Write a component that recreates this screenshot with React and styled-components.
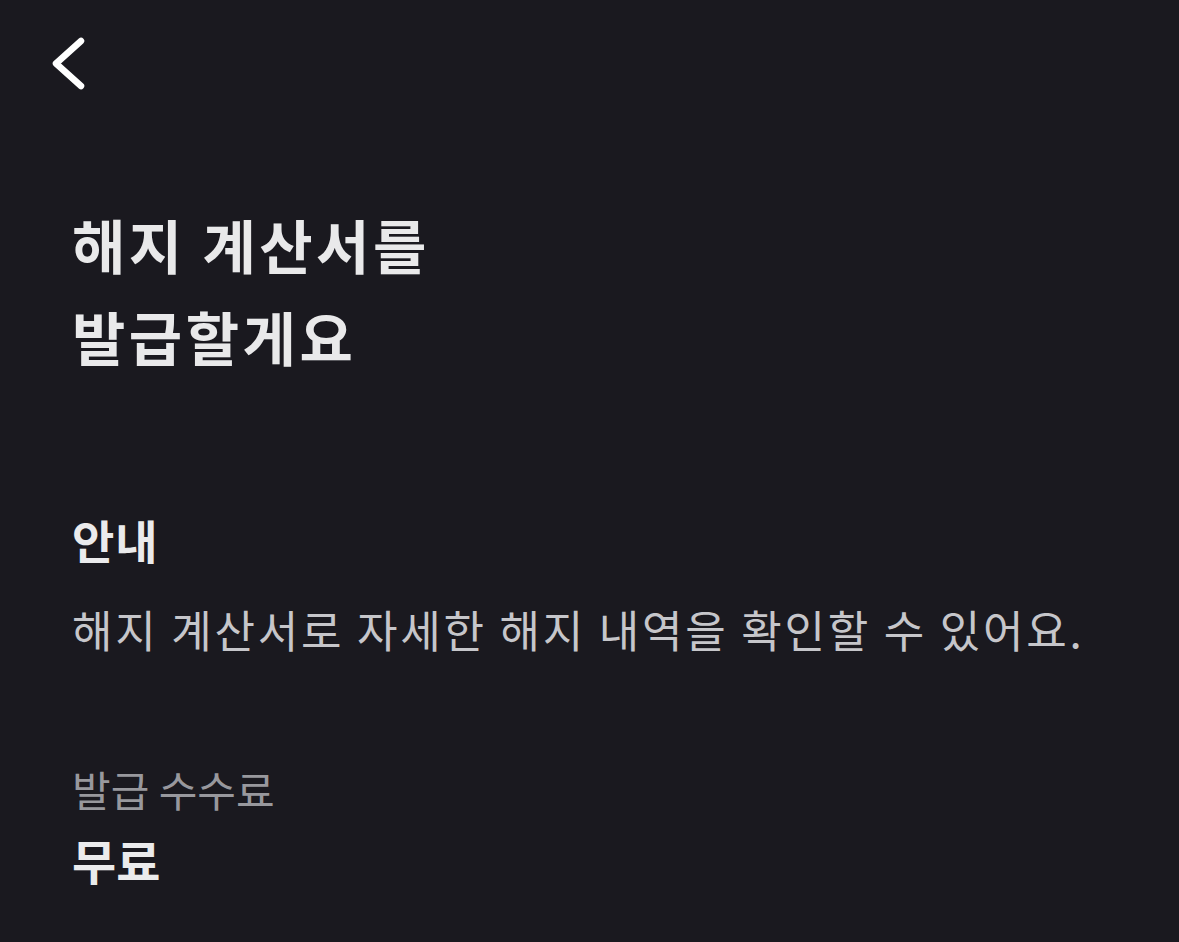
import React from 'react'
import styled, { createGlobalStyle } from 'styled-components'

const GlobalStyle = createGlobalStyle`
  html, body {
    margin: 0;
    padding: 0;
    background: #1a191f;
  }
  body {
    font-family: "Noto Sans CJK KR", "Noto Sans", sans-serif;
    -webkit-font-smoothing: antialiased;
  }
`

const BackIcon = () => (
  <svg width="40" height="56" viewBox="0 0 40 56" fill="none">
    <path
      d="M33 6 L8 28.5 L33 51"
      stroke="#ffffff"
      strokeWidth="6.5"
      strokeLinecap="round"
      strokeLinejoin="round"
    />
  </svg>
)

const App = () => {
  return (
    <Page>
      <GlobalStyle />
      <Header>
        <BackButton aria-label="뒤로">
          <BackIcon />
        </BackButton>
      </Header>
      <Content>
        <Title>
          해지 계산서를
          <br />
          발급할게요
        </Title>
        <SectionTitle>안내</SectionTitle>
        <Description>해지 계산서로 자세한 해지 내역을 확인할 수 있어요.</Description>
        <FeeLabel>발급 수수료</FeeLabel>
        <FeeValue>무료</FeeValue>
      </Content>
    </Page>
  )
}

export default App

const Page = styled.div`
  width: 1179px;
  min-height: 942px;
  background: #1a191f;
  color: #ebebeb;
`

const Header = styled.div`
  height: 126px;
  display: flex;
  align-items: center;
  padding-left: 48px;
`

const BackButton = styled.button`
  background: none;
  border: none;
  padding: 0;
  display: flex;
  cursor: pointer;
`

const Content = styled.div`
  padding: 0 72px;
  display: flex;
  flex-direction: column;
`

const Title = styled.h1`
  margin: 72px 0 0;
  font-size: 58px;
  line-height: 92px;
  font-weight: 700;
  color: #e9e9ea;
  letter-spacing: 3.5px;
`

const SectionTitle = styled.h2`
  margin: 125px 0 0;
  font-size: 46px;
  line-height: 64px;
  font-weight: 700;
  color: #ebebec;
  letter-spacing: 1px;
`

const Description = styled.p`
  margin: 26px 0 0;
  font-size: 44px;
  line-height: 64px;
  font-weight: 400;
  color: #c6c6ca;
  letter-spacing: 2.8px;
`

const FeeLabel = styled.div`
  margin-top: 98px;
  font-size: 42px;
  line-height: 60px;
  color: #98989d;
`

const FeeValue = styled.div`
  margin-top: 10px;
  font-size: 48px;
  line-height: 60px;
  font-weight: 700;
  color: #ebebec;
`
